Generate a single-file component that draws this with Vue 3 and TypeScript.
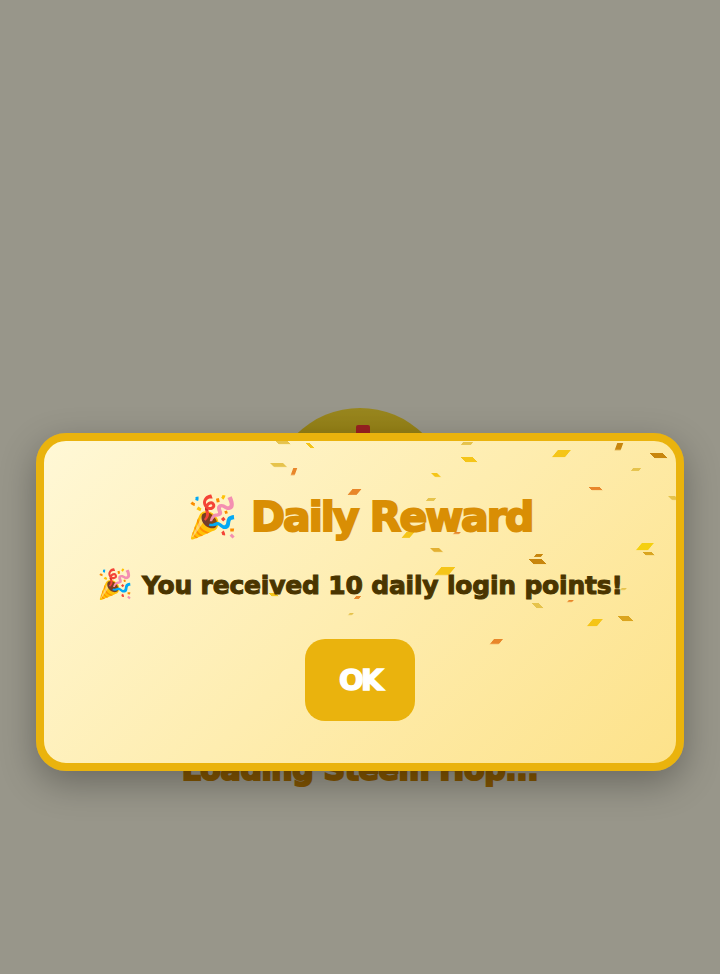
<script setup lang="ts">
interface Piece { x: number; y: number; w: number; h: number; c: string; flip?: boolean; steep?: boolean }

const gold = '#f5c518'
const amber = '#c8860d'
const orange = '#e8862a'
const pale = '#e6c34c'

// confetti, measured in page px then shifted into the card's padding box
const raw: Piece[] = [
  { x: 283, y: 442, w: 12, h: 3, c: pale, flip: true },
  { x: 310, y: 445, w: 4, h: 5, c: gold, flip: true },
  { x: 278, y: 465, w: 13, h: 4, c: pale, flip: true },
  { x: 294, y: 471, w: 4, h: 7, c: orange, steep: true },
  { x: 354, y: 492, w: 9, h: 6, c: orange },
  { x: 467, y: 443, w: 10, h: 3, c: pale },
  { x: 469, y: 459, w: 12, h: 5, c: gold, flip: true },
  { x: 561, y: 453, w: 13, h: 7, c: gold },
  { x: 619, y: 446, w: 6, h: 7, c: amber, steep: true },
  { x: 658, y: 455, w: 13, h: 5, c: amber, flip: true },
  { x: 436, y: 475, w: 6, h: 4, c: gold, flip: true },
  { x: 636, y: 469, w: 8, h: 3, c: pale },
  { x: 595, y: 488, w: 11, h: 3, c: orange, flip: true },
  { x: 431, y: 499, w: 8, h: 3, c: pale },
  { x: 673, y: 498, w: 7, h: 4, c: pale, flip: true },
  { x: 408, y: 535, w: 8, h: 6, c: gold },
  { x: 457, y: 533, w: 6, h: 2, c: orange },
  { x: 436, y: 550, w: 9, h: 4, c: '#e3b032', flip: true },
  { x: 538, y: 555, w: 7, h: 3, c: amber },
  { x: 537, y: 561, w: 13, h: 5, c: amber, flip: true },
  { x: 645, y: 546, w: 12, h: 7, c: '#f5d010' },
  { x: 648, y: 553, w: 9, h: 3, c: '#d9a520', flip: true },
  { x: 445, y: 571, w: 14, h: 8, c: gold },
  { x: 537, y: 605, w: 7, h: 5, c: pale, flip: true },
  { x: 570, y: 601, w: 5, h: 2, c: orange },
  { x: 595, y: 622, w: 10, h: 7, c: gold },
  { x: 625, y: 618, w: 11, h: 5, c: '#dba51f', flip: true },
  { x: 496, y: 641, w: 9, h: 5, c: orange },
  { x: 351, y: 614, w: 4, h: 2, c: pale },
  { x: 273, y: 594, w: 7, h: 3, c: gold, flip: true },
  { x: 357, y: 597, w: 5, h: 3, c: orange },
  { x: 623, y: 589, w: 5, h: 2, c: pale },
]

const pieces = raw.map((p) => ({
  left: p.x - 44 - p.w / 2 + 'px',
  top: p.y - 441 - p.h / 2 + 'px',
  width: p.w + 'px',
  height: p.h + 'px',
  background: p.c,
  transform: `skewX(${p.flip ? 45 : p.steep ? -20 : -40}deg)`,
}))
</script>

<template>
  <div class="page">
    <div class="loader">
      <div class="ball"><span class="cap"></span></div>
      <div class="loadingText">Loading Steem Hop...</div>
    </div>
    <div class="overlay">
      <div class="card">
        <div class="confetti">
          <i v-for="(p, i) in pieces" :key="i" class="bit" :style="p"></i>
        </div>
        <h2 class="title"><span class="emoji">🎉</span> Daily Reward</h2>
        <p class="message"><span class="emoji">🎉</span> You received 10 daily login points!</p>
        <button class="okBtn">OK</button>
      </div>
    </div>
  </div>
</template>

<style>
html, body { margin: 0; padding: 0; }
</style>

<style scoped>
.page {
  position: relative;
  width: 720px;
  height: 974px;
  overflow: hidden;
  background: #fdfae6;
  font-family: "DejaVu Sans", "Inter", sans-serif;
}
.loader {
  display: flex;
  flex-direction: column;
  align-items: center;
  padding-top: 408px;
}
.ball {
  width: 180px;
  height: 180px;
  border-radius: 50%;
  background: linear-gradient(180deg, #ffe135 0%, #efcb10 30%, #e0b000 100%);
  display: flex;
  justify-content: center;
}
.cap {
  width: 14px;
  height: 12px;
  margin-top: 17px;
  margin-left: 6px;
  background: #ff3838;
  border-radius: 2px;
}
.loadingText {
  margin-top: 160px;
  font-size: 30px;
  font-weight: 700;
  line-height: 44px;
  letter-spacing: -.4px;
  color: #d98e04;
  white-space: nowrap;
  -webkit-text-stroke: 2px #d98e04;
}
.overlay {
  position: absolute;
  inset: 0;
  background: rgba(0, 0, 0, .4);
}
.card {
  position: absolute;
  left: 36px;
  top: 433px;
  width: 648px;
  height: 338px;
  box-sizing: border-box;
  border: 8px solid #eab30d;
  border-radius: 30px;
  background: linear-gradient(135deg, #fff8d6, #fde28a);
  box-shadow: 0 12px 36px rgba(0, 0, 0, .3);
  overflow: hidden;
  display: flex;
  flex-direction: column;
  align-items: center;
  padding-top: 46px;
}
.confetti {
  position: absolute;
  inset: 0;
}
.bit {
  position: absolute;
  filter: blur(.4px);
}
.title {
  position: relative;
  margin: 0;
  font-size: 41px;
  line-height: 60px;
  font-weight: 700;
  letter-spacing: -2px;
  color: #d98e04;
  white-space: nowrap;
  -webkit-text-stroke: 2px #d98e04;
}
.title .emoji {
  font-size: 41px;
  line-height: 1;
  letter-spacing: 0;
  -webkit-text-stroke: 0;
}
.message {
  position: relative;
  margin: 19px 0 0;
  font-size: 25px;
  line-height: 40px;
  font-weight: 700;
  letter-spacing: -.2px;
  color: #4a3500;
  white-space: nowrap;
  -webkit-text-stroke: 1px #4a3500;
}
.message .emoji {
  font-size: 29px;
  line-height: 1;
  letter-spacing: 0;
  -webkit-text-stroke: 0;
}
.okBtn {
  position: relative;
  margin-top: 33px;
  width: 110px;
  height: 82px;
  border: 0;
  border-radius: 20px;
  background: #eab30d;
  color: #fff;
  font-family: inherit;
  font-size: 29px;
  font-weight: 700;
  letter-spacing: -2.5px;
  -webkit-text-stroke: 1.5px #fff;
}
.emoji {
  font-family: "Noto Color Emoji", sans-serif;
}
</style>
